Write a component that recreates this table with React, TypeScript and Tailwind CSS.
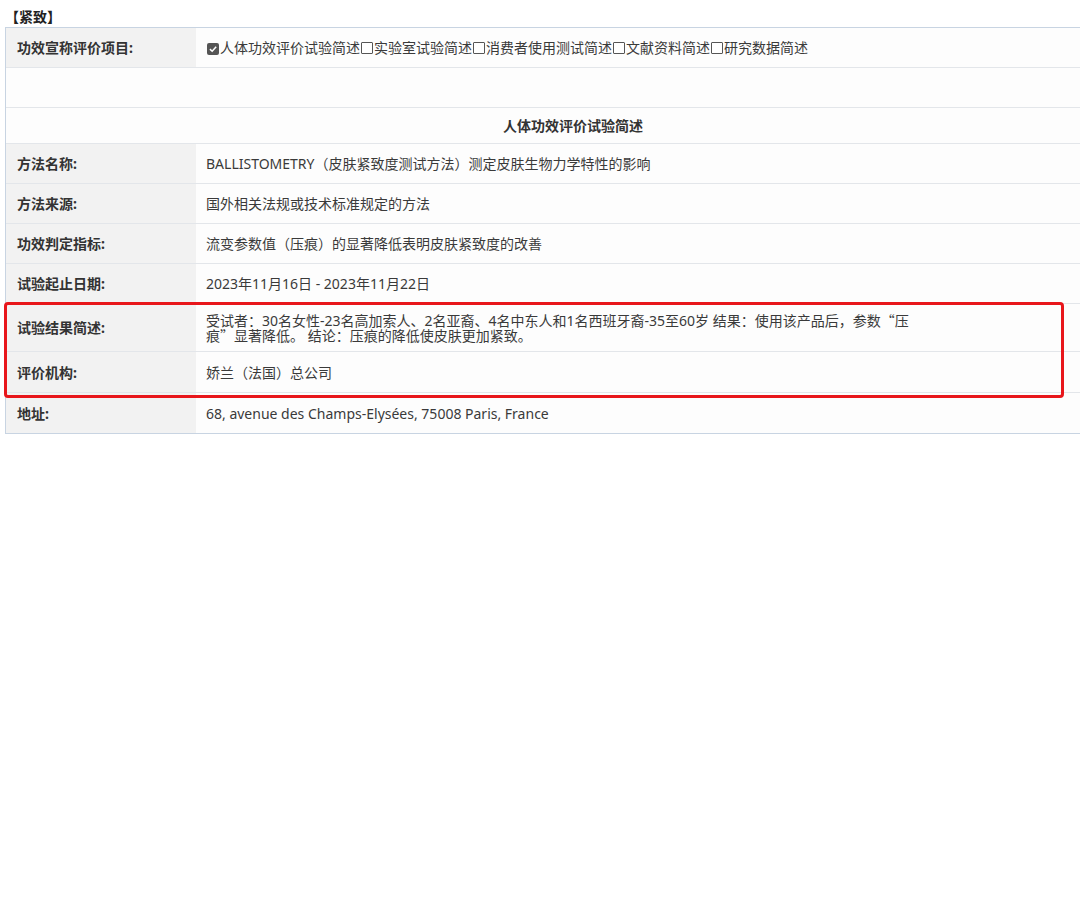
const font = "font-['Noto_Sans','Noto_Sans_CJK_SC',sans-serif]";
const cjk = "font-['Noto_Sans_CJK_SC',sans-serif]";

type Row = { label: string; value: React.ReactNode; h: string };

function Checkbox({ checked }: { checked?: boolean }) {
  return checked ? (
    <span className="inline-flex h-[12px] w-[12px] items-center justify-center rounded-[2px] bg-[#555] align-[-1px]">
      <svg viewBox="0 0 12 12" className="h-[10px] w-[10px]">
        <path d="M2.3 6.2 L5 8.7 L9.8 3.2" fill="none" stroke="#fff" strokeWidth="1.8" />
      </svg>
    </span>
  ) : (
    <span className="inline-block h-[12px] w-[12px] rounded-[1px] border border-[#555] bg-white align-[-1px]" />
  );
}

function Line({ label, value, h }: Row) {
  return (
    <div className={`grid grid-cols-[190px_1fr] border-b border-[#e3e6ea] ${h}`}>
      <div className="flex items-center bg-[#f2f2f2] pl-[11px] text-[14px] font-bold text-[#333]">{label}</div>
      <div className="flex items-center pl-[10px] text-[14px] text-[#3a3a3a]">{value}</div>
    </div>
  );
}

export default function App() {
  const items = ["人体功效评价试验简述", "实验室试验简述", "消费者使用测试简述", "文献资料简述", "研究数据简述"];
  const rows: Row[] = [
    { label: "方法名称:", value: "BALLISTOMETRY（皮肤紧致度测试方法）测定皮肤生物力学特性的影响", h: "h-[40px]" },
    { label: "方法来源:", value: "国外相关法规或技术标准规定的方法", h: "h-[40px]" },
    { label: "功效判定指标:", value: "流变参数值（压痕）的显著降低表明皮肤紧致度的改善", h: "h-[40px]" },
    { label: "试验起止日期:", value: "2023年11月16日 - 2023年11月22日", h: "h-[40px]" },
    {
      label: "试验结果简述:",
      value: (
        <div className="leading-[14px]">
          受试者：30名女性-23名高加索人、2名亚裔、4名中东人和1名西班牙裔-35至60岁 结果：使用该产品后，参数<span className={cjk}>“</span>压
          <br />
          痕<span className={cjk}>”</span>显著降低。 结论：压痕的降低使皮肤更加紧致。
        </div>
      ),
      h: "h-[48px]",
    },
    { label: "评价机构:", value: "娇兰（法国）总公司", h: "h-[41px]" },
    { label: "地址:", value: "68, avenue des Champs-Elysées, 75008 Paris, France", h: "h-[40px]" },
  ];

  return (
    <div className={`h-[898px] w-[1080px] overflow-hidden bg-white ${font}`}>
      <div className="pl-[5px] pt-[7px] text-[14px] font-bold leading-[20px] text-[#222]">【紧致】</div>
      <div className="relative ml-[5px] w-[1136px] border border-[#c8d4e2] bg-[#fdfdfd]">
        <div className="grid h-[40px] grid-cols-[190px_1fr] border-b border-[#e3e6ea]">
          <div className="flex items-center bg-[#f2f2f2] pl-[11px] text-[14px] font-bold text-[#333]">功效宣称评价项目:</div>
          <div className="flex items-center pl-[10px] text-[14px] text-[#3a3a3a]">
            {items.map((t, i) => (
              <span key={t} className="flex items-center">
                <span className="mx-[1px]"><Checkbox checked={i === 0} /></span>
                {t}
              </span>
            ))}
          </div>
        </div>
        <div className="h-[40px] border-b border-[#e3e6ea]" />
        <div className="flex h-[36px] items-center justify-center border-b border-[#e3e6ea] text-[14px] font-bold text-[#333]">
          人体功效评价试验简述
        </div>
        {rows.map((r, i) => (
          <div key={r.label} className={i === rows.length - 1 ? "[&>div]:border-b-0" : ""}>
            <Line {...r} />
          </div>
        ))}
        <div className="pointer-events-none absolute left-[-2px] top-[274px] h-[96px] w-[1060px] rounded-[4px] border-[3px] border-[#e8161b]" />
      </div>
    </div>
  );
}
